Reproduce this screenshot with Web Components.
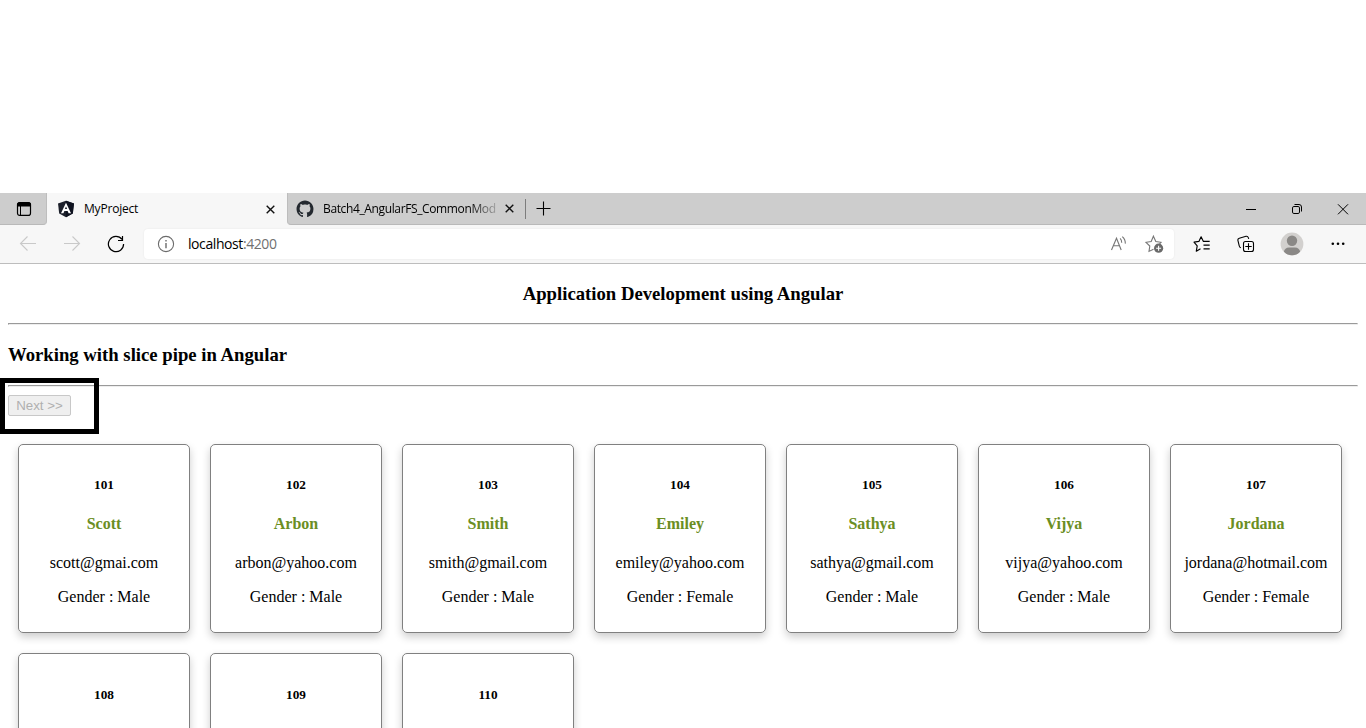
<!DOCTYPE html>
<html lang="en">
<head>
<meta charset="utf-8">
<title>MyProject</title>
<style>
html,body{margin:0;height:100%;overflow:hidden;background:#fff}
body{font-family:"Liberation Serif","Times New Roman",serif;font-size:16px;color:#000}
</style>
</head>
<body>
<browser-window></browser-window>

<template id="t-window">
<style>
:host{display:flex;flex-direction:column;box-sizing:border-box;height:100vh;padding-top:193px;overflow:hidden}
</style>
<tab-strip></tab-strip>
<address-bar></address-bar>
<slice-page></slice-page>
</template>

<template id="t-strip">
<style>
:host{display:flex;flex:none;height:32px;background:#f7f7f7;font-family:"Open Sans","Noto Sans",sans-serif}
.menu{width:47px;box-sizing:border-box;background:#cdcdcd;border-bottom:1px solid #b9b9b9;border-right:1px solid #bdbdbd;border-bottom-right-radius:4px;display:flex;align-items:center;padding-left:16px}
.rest{flex:1;display:flex;background:#cdcdcd;border-bottom:1px solid #b9b9b9;border-left:1px solid #bdbdbd;border-bottom-left-radius:4px;box-sizing:border-box;align-items:center}
.sep{width:1px;height:20px;background:#7d7d7d;margin-left:-1px}
svg{display:block;flex:none}
.plus{margin-left:10px}
.ctl{margin-left:auto;display:flex;align-items:center}
.ctl svg{width:46px;height:31px}
.long{--ls:-.37px}
</style>
<div class="menu"><svg width="16" height="16" viewBox="0 0 16 16" fill="none" stroke="#000"><rect x="1.5" y="1.6" width="13" height="12.8" rx="2.2" stroke-width="1.2"/><path d="M1.5 3.3V5h13V3.3q0-1.6-1.8-1.6H3.3q-1.8 0-1.8 1.6z" fill="#000"/><path d="M4.5 5v9.3"/></svg></div>
<browser-tab active>
  <svg slot="icon" width="18" height="18" viewBox="0 0 18 18"><path d="M9 .8 17 3.5 15.8 13.5 9 17.2 2.2 13.5 1 3.5z" fill="#1c202b"/><path d="M9 .8 17 3.5 15.8 13.5 9 17.2z" fill="#0f1320"/><path d="M9 2.8 4 13.3h2.4l1-2.4h3.2l1 2.4H14zM9 6.4l1.1 2.7H7.9z" fill="#fff" fill-rule="evenodd"/></svg>MyProject</browser-tab>
<div class="rest">
  <browser-tab class="long">
    <svg slot="icon" width="18" height="18" viewBox="-.5 -.5 17 17"><path fill="#24292f" d="M8 0C3.58 0 0 3.58 0 8c0 3.54 2.29 6.53 5.47 7.59.4.07.55-.17.55-.38 0-.19-.01-.82-.01-1.49-2.01.37-2.53-.49-2.69-.94-.09-.23-.48-.94-.82-1.13-.28-.15-.68-.52-.01-.53.63-.01 1.08.58 1.23.82.72 1.21 1.87.87 2.33.66.07-.52.28-.87.51-1.07-1.78-.2-3.64-.89-3.64-3.95 0-.87.31-1.59.82-2.15-.08-.2-.36-1.02.08-2.12 0 0 .67-.21 2.2.82.64-.18 1.32-.27 2-.27s1.36.09 2 .27c1.53-1.04 2.2-.82 2.2-.82.44 1.1.16 1.92.08 2.12.51.56.82 1.27.82 2.15 0 3.07-1.87 3.75-3.65 3.95.29.25.54.73.54 1.48 0 1.07-.01 1.93-.01 2.2 0 .21.15.46.55.38A8.01 8.01 0 0 0 16 8c0-4.42-3.58-8-8-8z"/></svg>Batch4_AngularFS_CommonMod</browser-tab>
  <span class="sep"></span>
  <svg class="plus" width="15" height="15" viewBox="0 0 15 15" stroke="#000" stroke-width="1.1"><path d="M7.5.5v14M.5 7.5h14"/></svg>
  <div class="ctl">
    <svg viewBox="0 0 46 31" stroke="#000" fill="none"><path d="M18 16.5h10"/></svg>
    <svg viewBox="0 0 46 31" stroke="#000" fill="none"><rect x="18.5" y="13.5" width="7" height="7" rx="1.4"/><path d="M20.5 11.5h4.5q2.5 0 2.5 2.5v4.5"/></svg>
    <svg viewBox="0 0 46 31" stroke="#000" fill="none"><path d="m18 11.3 10 10m0-10-10 10"/></svg>
  </div>
</div>
</template>

<template id="t-tab">
<style>
:host{display:flex;align-items:center;width:238px;height:31px;box-sizing:border-box;padding:0 12px 0 8px;font-size:12px;letter-spacing:var(--ls,-.2px);color:#000}
:host([active]){width:240px;height:32px;background:#f7f7f7;padding:0 12px 0 10px}
::slotted(svg){display:block}
.t{margin-left:9px;width:174px;line-height:18px;white-space:nowrap}
:host(:not([active])) .t{-webkit-mask-image:linear-gradient(90deg,#000 146px,transparent 180px);mask-image:linear-gradient(90deg,#000 146px,transparent 180px)}
.x{margin-left:auto}
</style>
<slot name="icon"></slot><div class="t"><slot></slot></div>
<svg class="x" width="9" height="9" viewBox="0 0 9 9" stroke="#111" stroke-width="1.4"><path d="m.7.7 7.6 7.6m0-7.6L.7 8.3"/></svg>
</template>

<template id="t-bar">
<style>
:host{display:flex;flex:none;height:39px;box-sizing:border-box;background:#f7f7f7;border-bottom:1px solid #bdbdbd;align-items:center;font-family:"Open Sans","Noto Sans",sans-serif}
svg{display:block;flex:none}
.nav{display:flex;width:144px;box-sizing:border-box;padding-left:19px;gap:26px}
.field{display:flex;align-items:center;width:1030px;height:30px;border-radius:4px;background:#fff;box-shadow:0 0 2px #00000014;box-sizing:border-box;padding:0 10px 0 13px}
.url{margin-left:13px;font-size:14px;line-height:20px;letter-spacing:-.42px;color:#000;white-space:nowrap}
.url span{color:#707070}
.read{margin-left:auto;margin-right:17px}
.tools{display:flex;flex:1;align-items:center;padding-left:19px}
</style>
<div class="nav">
 <svg width="18" height="18" viewBox="0 0 18 18" fill="none" stroke="#c9c9c9" stroke-width="1.1"><path d="M17 8.5H1.5M8.5 1.5l-7 7 7 7"/></svg>
 <svg width="18" height="18" viewBox="0 0 18 18" fill="none" stroke="#c9c9c9" stroke-width="1.1"><path d="M1 8.5h15.5m-7-7 7 7-7 7"/></svg>
 <svg width="18" height="18" viewBox="0 0 18 18" fill="none" stroke="#000" stroke-width="1.2"><path d="M15 4.4A7.6 7.6 0 1 0 16.6 9M15.5 1v4.5H11"/></svg>
</div>
<div class="field">
 <svg width="18" height="18" viewBox="0 0 18 18" fill="none" stroke="#6b6b6b" stroke-width="1.1"><circle cx="9" cy="9" r="7.6"/><path d="M9 8v5.2M9 5v1.5" stroke-width="1.4"/></svg>
 <div class="url">localhost<span>:4200</span></div>
 <svg class="read" width="17" height="18" viewBox="0 0 17 18" fill="none" stroke="#767676" stroke-width="1.1"><path d="M1.5 15 6.5 3.2 11.2 15M3.4 10.7h6.2M10.1 3.4q1.8 1.8 1.6 4.4M12.3 1.6q3.2 2.8 3 7"/></svg>
 <svg width="20" height="20" viewBox="0 0 20 20" fill="none" stroke="#767676" stroke-width="1.1"><path d="M9.5 15.2 5 17.4l.8-5.4L2 8.3l5.2-.8L9.4 2.2l2.4 5.3 5.2.8-1.5 1.5"/><circle cx="14.6" cy="14.2" r="4.6" fill="#6a6a6a" stroke="none"/><path d="M14.6 11.7v5M12.1 14.2h5" stroke="#fff"/></svg>
</div>
<div class="tools">
 <svg width="18" height="18" viewBox="0 0 18 18" fill="none" stroke="#000" stroke-width="1.15" stroke-linejoin="round"><path d="m7.5 13.8-4.2 2.4.9-5.4L1 7.1l4.9-.7 2.2-4.6 2.3 4.6h6.3M10.5 10.1h6.2M10.5 13.9h6.2"/></svg>
 <svg style="margin-left:26px" width="18" height="18" viewBox="0 0 18 18" fill="none" stroke="#000" stroke-width="1.1"><rect x="6.5" y="6.5" width="10" height="10" rx="2"/><path d="M11.5 8.3v6.4M8.3 11.5h6.4M3.9 12.8Q2.6 12.4 2.3 11L.9 5.3Q.6 3.7 2.3 3.2L9 1.3q1.8-.3 2.4 1.5l.3 1.1"/></svg>
 <svg style="margin-left:25px" width="24" height="24" viewBox="0 0 24 24"><defs><clipPath id="c"><circle cx="12" cy="12" r="11.2"/></clipPath></defs><circle cx="12" cy="12" r="11.4" fill="#d2d0ce"/><g fill="#8a8886" clip-path="url(#c)"><circle cx="12" cy="8.8" r="5.2"/><path d="M3.8 20Q4.7 15.7 9 15.6h6q4.3.1 5.2 4.4L16 24H8z"/></g></svg>
 <svg style="margin-left:26px" width="16" height="16" viewBox="0 0 16 16"><circle cx="2.8" cy="7.7" r="1.3"/><circle cx="8" cy="7.7" r="1.3"/><circle cx="13.2" cy="7.7" r="1.3"/></svg>
</div>
</template>

<template id="t-page">
<style>
:host{display:flow-root;padding:0 8px}
h3{font-size:18.72px;margin:18.72px 0;line-height:22px}
.title{text-align:center}
hr{margin:8px 0;color:gray}
.pager{position:relative;height:39px}
button{display:block;box-sizing:border-box;width:63px;height:21px;margin:0;padding:1px 6px;font:13.333px "Liberation Sans",Arial,sans-serif;white-space:nowrap;border:1px solid #c8c8c8;border-radius:2px;background:#efefef;color:#afafaf}
.mark{position:absolute;left:-8px;top:-17px;width:99px;height:56px;box-sizing:border-box;border:5px solid #000}
.cards{display:flex;flex-wrap:wrap}
</style>
<h3 class="title">Application Development using Angular</h3>
<hr>
<h3>Working with slice pipe in Angular</h3>
<hr>
<div class="pager"><button disabled>Next &gt;&gt;</button><div class="mark"></div></div>
<div class="cards"></div>
</template>

<template id="t-card">
<style>
:host{display:block;box-sizing:border-box;width:172px;margin:10px;padding:10px;border:1px solid gray;border-radius:5px;box-shadow:0 4px 8px 0 rgba(0,0,0,.2);text-align:center;white-space:nowrap}
h5{font-size:13.28px;line-height:15px;margin:22.18px 0}
h4{font-size:16px;line-height:19px;height:19px;margin:21.28px 0;color:#6b8e23}
p{line-height:18px;height:18px;margin:16px 0}
</style>
<h5><slot name="id"></slot></h5>
<h4><slot name="name"></slot></h4>
<p><slot name="email"></slot></p>
<p>Gender : <slot name="gender"></slot></p>
</template>

<script>
const define = (name, id, setup) => customElements.define(name, class extends HTMLElement {
  constructor() {
    super();
    const root = this.attachShadow({mode: 'open'});
    root.append(document.getElementById(id).content.cloneNode(true));
    if (setup) setup(root);
  }
});
const people = [
  [101,'Scott','scott@gmai.com','Male'],
  [102,'Arbon','arbon@yahoo.com','Male'],
  [103,'Smith','smith@gmail.com','Male'],
  [104,'Emiley','emiley@yahoo.com','Female'],
  [105,'Sathya','sathya@gmail.com','Male'],
  [106,'Vijya','vijya@yahoo.com','Male'],
  [107,'Jordana','jordana@hotmail.com','Female'],
  [108],[109],[110]
];
define('employee-card', 't-card');
define('browser-tab', 't-tab');
define('tab-strip', 't-strip');
define('address-bar', 't-bar');
define('slice-page', 't-page', root => {
  const list = root.querySelector('.cards');
  for (const person of people) {
    const card = document.createElement('employee-card');
    ['id','name','email','gender'].forEach((key, i) => {
      if (person[i] === undefined) return;
      const s = document.createElement('span');
      s.slot = key;
      s.textContent = person[i];
      card.append(s);
    });
    list.append(card);
  }
});
define('browser-window', 't-window');
</script>
</body>
</html>
